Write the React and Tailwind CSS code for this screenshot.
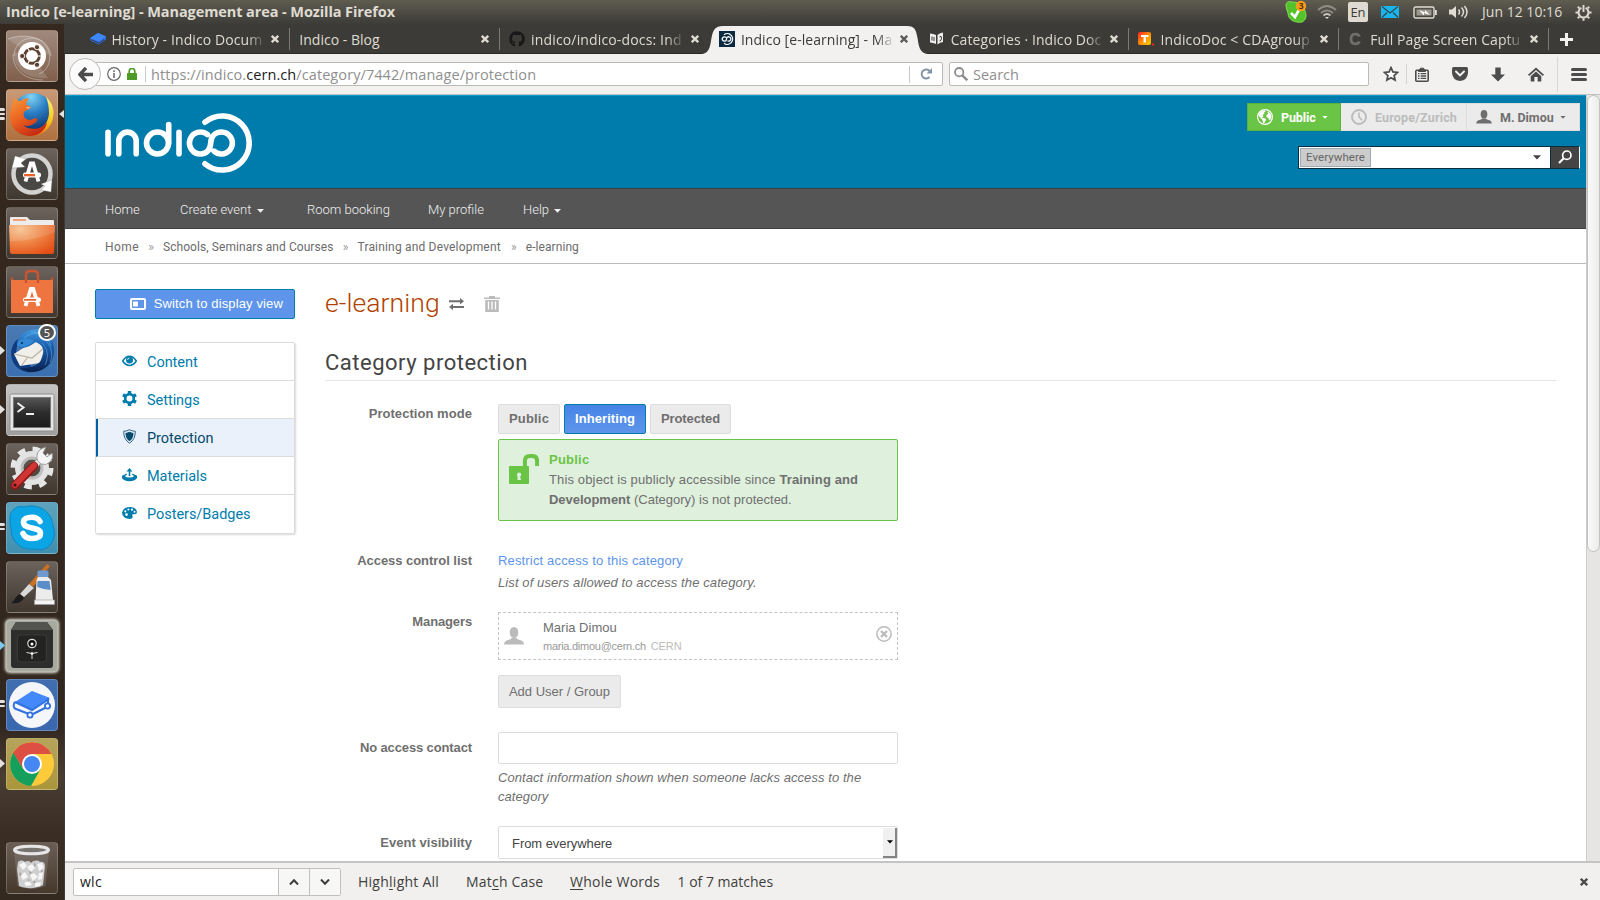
import React from "react";
import { FaGithub } from "react-icons/fa";

const ubuntu = "font-['Open_Sans','Noto_Sans',sans-serif]";

/* ---------- Launcher ---------- */

function UbuntuIcon() {
  return (
    <svg viewBox="0 0 52 52" className="size-full">
      <g fill="none" stroke="#fff" strokeOpacity=".35" strokeWidth="1">
        <path d="M2 9C14 4 38 4 43 22c3 12-4 20-10 22" />
        <path d="M8 26c0-10 8-18 18-18s18 8 19 18" />
        <path d="M7 24c0 16 12 26 30 26" />
      </g>
      <path d="M2 9C20 2 40 8 44 24L26 26Z M8 22c-1 16 12 28 34 26L26 26Z" fill="#fff" fillOpacity=".15" />
      <circle cx="26" cy="26" r="14" fill="#fff" />
      <circle cx="26" cy="26" r="7.3" fill="none" stroke="#5c4030" strokeWidth="3" />
      <g stroke="#fff" strokeWidth="1.2">
        <path d="M26 26 36 26M26 26l-5-9M26 26l-5 9" />
      </g>
      <circle cx="26" cy="26" r="5.6" fill="#fff" />
      <g fill="#5c4030" stroke="#fff" strokeWidth=".9">
        <circle cx="16.2" cy="26" r="2.6" />
        <circle cx="31" cy="17.2" r="2.6" />
        <circle cx="31" cy="34.8" r="2.6" />
      </g>
    </svg>
  );
}

function FirefoxIcon() {
  return (
    <svg viewBox="0 0 52 52" className="size-full">
      <defs>
        <radialGradient id="ffb" cx=".45" cy=".1" r=".9">
          <stop offset="0" stopColor="#7fd4f5" />
          <stop offset=".45" stopColor="#2a7fc4" />
          <stop offset="1" stopColor="#0c2a66" />
        </radialGradient>
        <linearGradient id="ffo" x1="0" y1="0" x2=".6" y2="1">
          <stop offset="0" stopColor="#f79a3c" />
          <stop offset=".5" stopColor="#ec6420" />
          <stop offset="1" stopColor="#c62d14" />
        </linearGradient>
        <linearGradient id="ffy" x1="0" y1="0" x2="0" y2="1">
          <stop offset="0" stopColor="#fff27a" />
          <stop offset=".6" stopColor="#f9c81c" />
          <stop offset="1" stopColor="#f07a18" />
        </linearGradient>
      </defs>
      <circle cx="27" cy="24" r="20" fill="url(#ffb)" />
      <path d="M40 8c6 5 9 13 7 21-2 11-12 18-22 18l-2-4c12-1 19-8 20-18 0-7-1-12-3-17z" fill="url(#ffy)" />
      <path d="M8 8c1 3 4 4 6 4 3-2 6-3 9-2-2 2-3 4-3 6 2 0 4 1 5 2-1 2-4 3-6 4-2 2-2 5 0 7 3 3 7 2 10 0 3 0 3 3 0 5-4 3-8 4-12 2 7 6 18 5 24-3-1 8-8 14-17 14C12 47 4 38 4 27c0-7 3-11 4-19z" fill="url(#ffo)" />
      <path d="M20 18l5 0-3 2z" fill="#fff" fillOpacity=".5" />
    </svg>
  );
}

function UpdaterIcon() {
  return (
    <svg viewBox="0 0 52 52" className="size-full">
      <circle cx="26" cy="26" r="18.500" fill="#4a4845" stroke="#d4d3d1" strokeWidth="4.500" />
      <path d="M9 8 6 20l13-1-4-4 5-4z" fill="#fff" stroke="#777" strokeWidth=".3" />
      <path d="M46 32 35 36l4 2-4 4 10 2z" fill="#fff" stroke="#777" strokeWidth=".3" />
      <path d="M19.500 33.500 24.800 15.500h2.400L32.500 33.500" fill="none" stroke="#fff" strokeWidth="3.800" />
      <rect x="17" y="24.500" width="18" height="5" rx="2" fill="#fff" />
      <rect x="18" y="26" width="11" height="2.300" fill="#e9622c" />
    </svg>
  );
}

function FilesIcon() {
  return (
    <svg viewBox="0 0 52 52" className="size-full">
      <defs>
        <radialGradient id="fold" cx=".25" cy=".15" r="1">
          <stop offset="0" stopColor="#f6c08a" />
          <stop offset=".5" stopColor="#ee8344" />
          <stop offset="1" stopColor="#e44d14" />
        </radialGradient>
      </defs>
      <path d="M4 11q0-1 1-1h16l3 3h23q1 0 1 1v6H4z" fill="#eeeceb" />
      <rect x="7" y="12" width="13" height="2" fill="#f0a278" />
      <path d="M3 18h46l-1 27q0 2-2 2H6q-2 0-2-2z" fill="url(#fold)" />
      <path d="M3 18h46v7C30 33 14 34 4 34z" fill="#fff" fillOpacity=".12" />
    </svg>
  );
}

function SoftwareIcon() {
  return (
    <svg viewBox="0 0 52 52" className="size-full">
      <path d="M5 10v6h42v-6l-3 4H8z" fill="#c4532b" />
      <rect x="5" y="14" width="42" height="33" fill="#ee7440" />
      <path d="M20 17V9q0-4 4-4h4q4 0 4 4v8" fill="none" stroke="#c95630" strokeWidth="2.500" />
      <path d="M19.500 40 24.800 23h2.400L32.500 40" fill="none" stroke="#fff" strokeWidth="3.800" />
      <rect x="17" y="31.500" width="18" height="4.600" rx="2" fill="#fff" />
      <rect x="18" y="33" width="12" height="1.700" fill="#e9622c" />
    </svg>
  );
}

function ThunderbirdIcon() {
  return (
    <svg viewBox="0 0 52 52" className="size-full">
      <defs>
        <linearGradient id="tb" x1="0" y1="0" x2="0" y2="1">
          <stop offset="0" stopColor="#3f9be0" />
          <stop offset=".4" stopColor="#1b5fb0" />
          <stop offset="1" stopColor="#08204f" />
        </linearGradient>
      </defs>
      <path d="M12 14C4 20 3 33 9 40c5 6 12 8 18 7l-4-10-13-9z" fill="#0f3c80" />
      <path d="M8 29 28 16l11 6-5 16-20 3z" fill="#f1efe9" />
      <path d="m8 29 18 4 12-10M15 41l7-9" fill="none" stroke="#b9b3a6" strokeWidth="1.200" />
      <path d="M11 21C11 12 18 5 30 4c12 1 19 11 18 23-1 12-10 20-22 20-5 0-9-2-12-4 10 1 20-3 22-10 3-8 1-13-6-16-6 4-12 8-19 4z" fill="url(#tb)" />
      <path d="M11 21c0-5 3-7 7-7 4-1 7 0 10 2-4 4-9 7-13 6z" fill="#3588d4" />
      <path d="M18 13c8-7 19-6 25 2M25 7c9-1 17 5 20 14M36 18c6 6 7 14 3 22M41 17c5 6 6 14 3 20" fill="none" stroke="#7cc4f2" strokeOpacity=".45" />
      <circle cx="16" cy="18" r=".9" fill="#081b3c" />
    </svg>
  );
}

function TerminalIcon() {
  return (
    <svg viewBox="0 0 52 52" className="size-full">
      <defs>
        <linearGradient id="term" x1="0" y1="0" x2="0" y2="1">
          <stop offset="0" stopColor="#555" />
          <stop offset=".5" stopColor="#2d2d2d" />
          <stop offset="1" stopColor="#1b1b1b" />
        </linearGradient>
      </defs>
      <rect x="4" y="10" width="44" height="37" rx="1.500" fill="#e4e4e4" stroke="#8d8d8d" />
      <rect x="7.500" y="13.500" width="37" height="30" fill="url(#term)" stroke="#777" />
      <path d="m11.500 19 6 4.500-6 4.500" fill="none" stroke="#eee" strokeWidth="2" />
      <path d="M20 30h8" stroke="#eee" strokeWidth="2" />
    </svg>
  );
}

function SettingsIcon() {
  return (
    <svg viewBox="0 0 52 52" className="size-full">
      <circle cx="26" cy="25" r="19" fill="none" stroke="#e6e6e6" strokeWidth="5" strokeDasharray="7.460 7.460" />
      <circle cx="26" cy="25" r="13" fill="none" stroke="#e3e3e3" strokeWidth="8" />
      <circle cx="26" cy="25" r="10" fill="none" stroke="#bdbdbd" strokeWidth="3" />
      <path d="m24 28 12-13" stroke="#8a8a8a" strokeWidth="6.500" />
      <path d="m24 28 12-13" stroke="#ececec" strokeWidth="5" />
      <path d="M40 4l-3 6 4 4 5-4q2 5-2 9t-9 2q-5-3-4-9t9-8z" fill="#f4f4f4" stroke="#8a8a8a" strokeWidth=".8" />
      <path d="M9 42.500 28 23" stroke="#8f1717" strokeWidth="8.500" strokeLinecap="round" />
      <path d="M9 42 28 22.500" stroke="#cf3535" strokeWidth="6" strokeLinecap="round" />
      <circle cx="9" cy="42" r="1.600" fill="#3c1010" />
    </svg>
  );
}

function SkypeIcon() {
  return (
    <svg viewBox="0 0 52 52" className="size-full">
      <path d="M4 16C4 8 11 3 18 5 32 1 46 9 47 24c3 8 1 16-5 21-4 3-9 3-12 2C15 49 5 40 5 26c-1-3-1-7-1-10z" fill="#0ba4e4" stroke="#0d86bd" />
      <path d="M34 19.500C32 15.800 29 15.300 26 15.300c-5 0-8.500 1.700-8.500 5 0 4 4 4.700 8.500 5.700 4.700 1 8.500 2 8.500 5.500 0 4-4 5-8.500 5-4 0-7.300-1.300-9-5" fill="none" stroke="#fff" strokeWidth="5.600" strokeLinecap="round" />
    </svg>
  );
}

function PaintIcon() {
  return (
    <svg viewBox="0 0 52 52" className="size-full">
      <path d="M41 3 44 5 27 26l-4-3z" fill="#c87023" />
      <path d="m23 23 5 4-10 9-4-3z" fill="#d9d9d9" />
      <path d="m14 33 4 4c-3 5-8 6-13 5 4-2 4-7 9-9z" fill="#1c1c1c" />
      <rect x="31.500" y="9.500" width="11" height="6.500" rx="1.500" fill="#6f9bd0" />
      <path d="M32 16h10l3 3 2 20H29.500l1-20z" fill="#ececec" />
      <path d="M31.500 20h12l1.200 9-7-1-6.500-2z" fill="#5a8dc8" />
      <rect x="28.500" y="39" width="20" height="4.500" fill="#f5f5f5" stroke="#9a9a9a" strokeWidth=".6" />
    </svg>
  );
}

function SafeIcon() {
  return (
    <svg viewBox="0 0 52 52" className="size-full">
      <path d="M10 2h31l6 8v35q0 3-3 3H8q-3 0-3-3V10z" fill="#2d2d2b" />
      <path d="M10 2h31l6 8H5z" fill="#53534f" />
      <rect x="11.500" y="15" width="29" height="27" rx="3" fill="#232321" stroke="#3a3a38" strokeWidth="1.200" />
      <circle cx="26" cy="23.500" r="4.200" fill="#111" stroke="#dcdcdc" strokeWidth="1.200" />
      <circle cx="26" cy="24" r="1.500" fill="#fff" />
      <path d="M26 33.500v5.500M26 33.500l-5.500-1M26 33.500l5.500-1" stroke="#d8d8d8" strokeWidth="1" />
      <circle cx="26" cy="33.500" r="1.300" fill="#fff" />
    </svg>
  );
}

function GitbookIcon() {
  return (
    <svg viewBox="0 0 52 52" className="size-full">
      <circle cx="26" cy="26" r="23" fill="#f4f6fa" />
      <path d="M9 23 26 12l18 7-18 12z" fill="#4389fb" />
      <path d="M9 23c-2 2-2 6 1 7l13 5M9 23l17 8 17-11" fill="none" stroke="#2f71e0" strokeWidth="2" />
      <path d="m27 35 12-6M42 19v5" stroke="#2f71e0" strokeWidth="2" />
      <circle cx="24" cy="36" r="2.600" fill="#fff" stroke="#2f71e0" strokeWidth="1.800" />
      <circle cx="41.500" cy="27" r="2.600" fill="#fff" stroke="#2f71e0" strokeWidth="1.800" />
    </svg>
  );
}

function ChromeIcon() {
  return (
    <svg viewBox="0 0 52 52" className="size-full">
      <circle cx="26" cy="26" r="22" fill="#fdca3a" />
      <path d="M26 26V16h19.500A22 22 0 0 0 7 15l10.400 16z" fill="#dd4f43" />
      <path d="M7.200 14.800A22 22 0 0 0 25 48l9.600-17-17.300 0z" fill="#159f5c" />
      <circle cx="26" cy="26" r="10" fill="#fff" />
      <circle cx="26" cy="26" r="8" fill="#4687f3" />
    </svg>
  );
}

function TrashIcon() {
  return (
    <svg viewBox="0 0 52 52" className="size-full">
      <path d="M8 9h35l-3.500 35q-13.500 6-28 0z" fill="#999" fillOpacity=".3" />
      <path d="M12 20c2-2 5-2 7 0 3-2 5-1 6 1 3-3 7-3 9-1 3-1 5 1 5 4l-2 19c-7 4-17 4-24 1l-2-17z" fill="#cfcfcf" />
      <g fill="#f6f6f6">
        <path d="m13 23 5-3 3 4-4 4zM21 25l5-3 3 4-4 4zM31 22l5-1 2 5-5 3zM14 33l5-3 3 5-5 3zM24 33l4-2 4 4-5 4zM33 31l4-1-1 7-4 1zM18 41l5-2 3 4-6 1zM29 41l6-1-1 4-5 1z" />
      </g>
      <g fill="#a5a5a5">
        <path d="m13 30 3 2-2 3zM23 29l3 1-2 3zM27 39l3 0-2 3zM28 20l2 3-2 2zM35 28l2 1-2 2zM22 37l2 1-2 2z" />
      </g>
      <ellipse cx="25.500" cy="8" rx="17" ry="3.800" fill="#77736f" stroke="#e6e6e6" strokeWidth="3" />
    </svg>
  );
}

const neutral = "bg-linear-to-b from-[#6b635c] to-[#40372f]";

const launcher = [
  { name: "dash", Icon: UbuntuIcon, bg: "bg-linear-to-b from-[#a08a7d] to-[#80604c]" },
  { name: "firefox", Icon: FirefoxIcon, bg: "bg-linear-to-b from-[#c99a78] to-[#b0703e]", windows: 3, active: true },
  { name: "updater", Icon: UpdaterIcon, bg: neutral },
  { name: "files", Icon: FilesIcon, bg: neutral },
  { name: "software", Icon: SoftwareIcon, bg: neutral },
  { name: "mail", Icon: ThunderbirdIcon, bg: "bg-linear-to-b from-[#4a7ab2] to-[#3a6fb0]", windows: 1, badge: "5" },
  { name: "terminal", Icon: TerminalIcon, bg: "bg-linear-to-b from-[#c3c3c3] to-[#9e9e9e]", windows: 1 },
  { name: "settings", Icon: SettingsIcon, bg: neutral },
  { name: "skype", Icon: SkypeIcon, bg: "bg-linear-to-b from-[#5fa3bd] to-[#3f8fb0]", windows: 2 },
  { name: "paint", Icon: PaintIcon, bg: neutral },
  { name: "safe", Icon: SafeIcon, bg: "bg-[#a9aa9f] shadow-[0_0_3px_1px_#e8e8dc] border-[#e8e8dc]", windows: 1, blue: true },
  { name: "gitbook", Icon: GitbookIcon, bg: "bg-linear-to-b from-[#416eae] to-[#3a68ae]", windows: 2 },
  { name: "chrome", Icon: ChromeIcon, bg: "bg-linear-to-b from-[#b5a45c] to-[#ab963a]", windows: 1 },
];

function Tile({ Icon, bg, windows = 0, badge, active, blue }) {
  return (
    <div className={`relative size-[52px] shrink-0 rounded-[4px] border border-white/20 ${bg}`}>
      <div className="-m-px size-[52px]">
        <Icon />
      </div>
      {windows === 1 && (
        <svg viewBox="0 0 5 9" className="absolute -left-[7px] top-[20px] h-[9px] w-[5px]">
          <path d="M0 0v9l5-4.500z" fill={blue ? "#7cc8ef" : "#e3e1df"} />
        </svg>
      )}
      {windows > 1 && (
        <div className={`absolute -left-[7px] flex w-[5px] flex-col gap-[2px] ${windows === 3 ? "top-[18px]" : "top-[20px]"}`}>
          {Array.from({ length: windows }, (_, i) => (
            <span key={i} className="h-[2.5px] rounded-r-full bg-[#e3e1df]" />
          ))}
        </div>
      )}
      {active && (
        <svg viewBox="0 0 5 8" className="absolute -right-[7px] top-[20px] h-2 w-[5px]">
          <path d="M5 0v8L0 4z" fill="#e3e1df" />
        </svg>
      )}
      {badge && (
        <span className="absolute -top-[2px] right-px flex h-[17px] w-[18px] items-center justify-center rounded-full border-2 border-white bg-[#555] text-[11px] leading-none text-white">
          {badge}
        </span>
      )}
    </div>
  );
}

function Launcher() {
  return (
    <div className="flex w-[65px] shrink-0 flex-col gap-[7px] border-r border-[#3c3b37] bg-[linear-gradient(180deg,#35281e_0%,#32271f_80%,#4a3d32_86%,#3a2e25_92%,#34291f_100%)] pl-[6px] pt-[6px]">
      {launcher.map((t) => (
        <Tile key={t.name} {...t} />
      ))}
      <div className="mt-[45px]">
        <Tile Icon={TrashIcon} bg="bg-linear-to-b from-[#6b5f55] to-[#46382d]" />
      </div>
    </div>
  );
}

/* ---------- Title bar ---------- */

function SkypeTrayIcon() {
  return (
    <svg viewBox="0 0 22 24" className="h-6 w-[22px]">
      <path d="M1 5c0-3 3-4 6-3 8 0 12 4 13 9 2 5 1 9-3 11-7 1-14-2-14-9-1-3-2-5-2-8z" fill="#55c22c" stroke="#7fe052" />
      <path d="m6 13 4 4 5-9" fill="none" stroke="#fff" strokeWidth="2.600" />
      <circle cx="16" cy="6" r="5.200" fill="#f59d1c" />
      <text x="14" y="9" fontSize="8" fontWeight="700" fill="#5a2c00" fontFamily="Open Sans">3</text>
    </svg>
  );
}

function TitleBar() {
  return (
    <div className={`flex h-6 shrink-0 items-center bg-linear-to-b from-[#5f5c50] to-[#3d3c38] pl-[6px] text-[#dfdbd2] ${ubuntu}`}>
      <span className="grow whitespace-nowrap text-[14.500px] font-bold leading-none tracking-[-0.09px]">
        Indico [e-learning] - Management area - Mozilla Firefox
      </span>
      <SkypeTrayIcon />
      <svg viewBox="0 0 20 16" className="ml-[10px] h-4 w-5" fill="none" stroke="#8f8c84" strokeWidth="1.800">
        <path d="M1 6q9-8 18 0M4 9q6-5 12 0" />
        <path d="M6.500 11.500q3.500-3 7 0" stroke="#c9c5bd" />
        <path d="m8 13 2 2 2-2z" fill="#dfdbd2" stroke="none" />
      </svg>
      <span className="ml-[11px] flex h-[20px] w-5 items-center justify-center rounded-[2px] bg-[#dfdbd2] text-[13px] leading-none text-[#3c3b37]">En</span>
      <svg viewBox="0 0 18 12" className="ml-[13px] h-[12px] w-[18px]">
        <rect width="18" height="12" fill="#19b6ee" />
        <path d="m1 .5 8 6.500 8-6.500M1 11.500l5-5M17 11.500l-5-5" fill="none" stroke="#33454e" strokeWidth="1.200" />
      </svg>
      <svg viewBox="0 0 25 13" className="ml-[14px] h-[13px] w-[25px]">
        <rect x="1" y="1" width="20" height="11" rx="1.500" fill="none" stroke="#dfdbd2" strokeWidth="1.400" />
        <rect x="3.500" y="3.500" width="15" height="6" fill="#9b988f" />
        <path d="m6 4 6 2.500 0-2.500 5 5-6-2v2.500z" fill="#fff" />
        <rect x="22" y="4" width="1.800" height="5" fill="#dfdbd2" />
      </svg>
      <svg viewBox="0 0 20 16" className="ml-[11px] h-4 w-5" fill="none" stroke="#dfdbd2" strokeWidth="1.500">
        <path d="M0 5.500h3L7 2v12l-4-3.500H0z" fill="#dfdbd2" stroke="none" />
        <path d="M9.500 5.500q2 2.500 0 5M12.500 3.500q4 4.500 0 9M15.500 2q5 6 0 12" />
      </svg>
      <span className="ml-[13px] w-[82px] whitespace-nowrap text-[14px] leading-none tracking-[0.02px]">Jun 12 10:16</span>
      <svg viewBox="0 0 18 18" className="ml-[11px] mr-[8px] h-[17px] w-[17px]" fill="none" stroke="#dfdbd2">
        <path d="M6.800 4.100A5.300 5.300 0 1 0 11.200 4.100" strokeWidth="2.200" />
        <path d="M9 1v7.500" strokeWidth="2" />
        <path d="M3 3l1.500 1.500M15 3l-1.500 1.500M.5 9H3M15 9h2.500M3 15l1.500-1.500M15 15l-1.500-1.500M9 15v2.800" strokeWidth="2.200" />
      </svg>
    </div>
  );
}

/* ---------- Tabs ---------- */

function GitbookMini() {
  return (
    <svg viewBox="0 0 16 16" className="size-4 shrink-0">
      <path d="M0 7.500 8 2l8 3.500v3L9 13.500 1 10z" fill="#2d6fe0" />
      <path d="M0 7 8 2l8 3.500L9 10.500z" fill="#3f88fb" />
      <path d="m1.500 8.800 7.400 3.400L14 8.700" fill="none" stroke="#3c3b37" />
    </svg>
  );
}
function IndicoMini() {
  return (
    <svg viewBox="0 0 16 16" className="size-4 shrink-0">
      <rect width="16" height="16" fill="#0b2a3f" />
      <g fill="none" stroke="#fff" strokeWidth="1.300">
        <path d="M7 6.500a2.200 2.200 0 1 0 0 3q.5-.6.5-1.500a2.200 2.200 0 1 1 1 1.800" />
        <path d="M5 3.700A5.400 5.400 0 1 1 5 12.300" />
      </g>
    </svg>
  );
}
function BookMini() {
  return (
    <svg viewBox="0 0 16 16" className="size-4 shrink-0">
      <path d="M1 2.500q3.500 0 6 1.500v9q-2.500-1.500-6-1.500zM14 1.500q-3 0-5.500 2.500v9.500q2.500-2.500 5.500-2.500z" fill="#eee" />
      <path d="M3 5.500v4M5 6v4M10.500 6q2-2 2 1t-2 3" stroke="#3c3b37" fill="none" />
    </svg>
  );
}
function TwikiMini() {
  return (
    <svg viewBox="0 0 16 16" className="size-4 shrink-0">
      <defs>
        <linearGradient id="tw" x1="0" x2="1" y1="0" y2="1">
          <stop offset="0" stopColor="#f22" />
          <stop offset=".5" stopColor="#ff8a00" />
          <stop offset="1" stopColor="#ffd000" />
        </linearGradient>
      </defs>
      <rect y="1" width="13" height="13" rx="2" fill="url(#tw)" />
      <path d="M3 5h7.500M6.700 5v6.500" stroke="#fff" strokeWidth="2.200" />
      <rect x="14" y="12.500" width="2" height="2" fill="#f22" />
    </svg>
  );
}
function CMini() {
  return (
    <svg viewBox="0 0 16 16" className="size-4 shrink-0">
      <path d="M11.300 5.700C10.500 2.500 3 1.500 3 8s7.500 5.500 8.300 2.300" fill="none" stroke="#6e6e6c" strokeWidth="2.800" />
    </svg>
  );
}

function Cross({ color }) {
  return (
    <svg viewBox="0 0 8 8" className="size-2 shrink-0" stroke={color} strokeWidth="2.300">
      <path d="m.8.8 6.400 6.400M7.200.8.8 7.200" />
    </svg>
  );
}

function TabText({ children, className = "" }) {
  return (
    <span className={`mr-auto shrink-0 overflow-hidden whitespace-nowrap pt-[2px] text-[14px] leading-[22px] ${className}`}>
      {children}
    </span>
  );
}

const fade = "w-[154px] mask-[linear-gradient(90deg,#000_88%,transparent)]";

function Tab({ icon, title, text, last }) {
  return (
    <div className="flex h-full w-[209.800px] shrink-0 items-center pl-[10px] pr-[9.500px]">
      {icon}
      <TabText className={`${icon ? "ml-[6px]" : ""} ${text}`}>{title}</TabText>
      <Cross color="#dfdbd2" />
      {!last && <span className="-mr-[10px] ml-[9.500px] h-[22px] w-px bg-[#7b7a76]" />}
    </div>
  );
}

function TabStrip() {
  return (
    <div className={`flex h-[30px] shrink-0 items-center border-b border-[#2a2926] bg-[#3c3b37] pl-[14.500px] text-[#dfdbd2] ${ubuntu}`}>
      <Tab icon={<GitbookMini />} title="History - Indico Docum" text={`${fade} tracking-[0.1px]`} />
      <Tab title="Indico - Blog" text="tracking-[0.02px]" />
      <Tab icon={<FaGithub className="size-4 shrink-0 text-[#181818]" />} title="indico/indico-docs: Ind" text={`${fade} tracking-[0.15px]`} last />
      <div className="relative h-full w-[209.800px] shrink-0 text-[#3c3b37]">
        <svg viewBox="0 0 230 28" preserveAspectRatio="none" className="absolute -left-[9px] top-[2px] h-[28px] w-[230px]">
          <path d="M0 28C10 28 10 20 11.500 12S15 0 23 0H207c8 0 9 4 10.500 12S219 28 230 28z" fill="#f2f1f0" />
        </svg>
        <div className="relative flex h-full items-center pl-[10px] pr-[10.500px]">
          <IndicoMini />
          <TabText className={`ml-[6px] tracking-[0.05px] ${fade}`}>Indico [e-learning] - Ma</TabText>
          <Cross color="#5c5b57" />
        </div>
      </div>
      <Tab icon={<BookMini />} title="Categories · Indico Doc" text={`${fade} tracking-[0.08px]`} />
      <Tab icon={<TwikiMini />} title="IndicoDoc < CDAgroup" text={`${fade} tracking-[0.12px]`} />
      <Tab icon={<CMini />} title="Full Page Screen Captu" text={`${fade} tracking-[0.06px]`} />
      <svg viewBox="0 0 13 13" className="ml-[12px] mt-[2px] size-[13px] shrink-0" stroke="#f3f2f0" strokeWidth="3">
        <path d="M6.500 0v13M0 6.500h13" />
      </svg>
    </div>
  );
}

/* ---------- Navigation toolbar ---------- */

function Toolbar() {
  return (
    <div className={`flex h-[41px] shrink-0 items-center border-b border-[#c3c1bd] bg-[#f2f1f0] pl-1 ${ubuntu}`}>
      <div className="relative z-10 flex size-8 shrink-0 items-center justify-center rounded-full border border-[#bdbbb8] bg-[#fbfbfb]">
        <svg viewBox="0 0 16 16" className="size-[15px]" fill="none" stroke="#4c4c4c" strokeWidth="3.600">
          <path d="M8.500 1 2 8l6.500 7M2.500 8H16" />
        </svg>
      </div>
      <div className="-ml-[6px] flex h-6 w-[848px] shrink-0 items-center rounded-[2px] border border-[#bdbbb8] bg-white pl-[11px]">
        <svg viewBox="0 0 14 14" className="size-[14px]" fill="none" stroke="#666">
          <circle cx="7" cy="7" r="6.300" strokeWidth="1.200" />
          <path d="M7 6v5M7 3.200v1.700" strokeWidth="1.500" />
        </svg>
        <svg viewBox="0 0 10 12" className="ml-[6px] h-3 w-[10px]">
          <path d="M2.200 5.500V3.300a2.800 2.800 0 0 1 5.600 0v2.200" fill="none" stroke="#4d9a26" strokeWidth="1.700" />
          <rect y="5" width="10" height="7" rx=".6" fill="#4d9a26" />
        </svg>
        <span className="ml-[8px] h-4 w-px bg-[#c9c9c9]" />
        <span className="ml-[5px] grow whitespace-nowrap pt-[2px] text-[14.500px] leading-5 tracking-[0.08px] text-[#8f8f8f]">
          https://indico.<span className="text-[#1c1c1c]">cern.ch</span>/category/7442/manage/protection
        </span>
        <span className="h-[17px] w-px bg-[#c9c9c9]" />
        <svg viewBox="0 0 12 12" className="ml-[10px] mr-[10px] size-3" fill="none" stroke="#8393a5" strokeWidth="1.900">
          <path d="M9.500 9A4.500 4.500 0 1 1 9.500 3" />
          <path d="M12 0v5.500H6.500z" fill="#8393a5" stroke="none" />
        </svg>
      </div>
      <div className="ml-[6px] flex h-6 w-[420px] shrink-0 items-center rounded-[2px] border border-[#bdbbb8] bg-white pl-[4px]">
        <svg viewBox="0 0 14 14" className="size-[14px]" fill="none" stroke="#8d8d8d">
          <circle cx="5.200" cy="5.200" r="4.200" strokeWidth="1.800" />
          <path d="m8.300 8.300 5 5" strokeWidth="2.400" />
        </svg>
        <span className="ml-[5px] pt-[2px] text-[14.500px] leading-5 text-[#8f8f8f]">Search</span>
      </div>
      <svg viewBox="0 0 16 16" className="ml-[14px] size-4" fill="#fff" stroke="#4c4c4c" strokeWidth="1.700">
        <path d="m8 1.600 1.900 4.300 4.700.5-3.500 3.100 1 4.600L8 11.700l-4.100 2.400 1-4.600L1.400 6.400l4.700-.5z" />
      </svg>
      <span className="ml-[7px] h-5 w-px bg-[#d5d3d0]" />
      <svg viewBox="0 0 14 15" className="ml-[8px] h-[15px] w-[14px]" fill="none" stroke="#4c4c4c" strokeWidth="1.600">
        <rect x=".8" y="3.300" width="12.400" height="10.900" rx="1" />
        <path d="M3.500 4.500V3Q5 2.800 5.500 1.200h3Q9 2.800 10.500 3v1.500z" fill="#4c4c4c" strokeWidth="1" />
        <path d="M3 6.700h1.500M3 9h1.500M3 11.300h1.500M5.600 6.700h5.600M5.600 9h5.600M5.600 11.300h5.600" strokeWidth="1.300" />
      </svg>
      <svg viewBox="0 0 16 14" className="ml-[23px] h-[14px] w-4">
        <path d="M1.500 0h13Q16 0 16 1.500V6q-.5 7-8 8Q.5 13 0 6V1.500Q0 0 1.500 0z" fill="#4c4c4c" />
        <path d="m4 4.500 4 3.900 4-3.900" fill="none" stroke="#f2f1f0" strokeWidth="2" strokeLinecap="round" />
      </svg>
      <svg viewBox="0 0 14 15" className="ml-[23px] h-[15px] w-[14px]">
        <path d="M4.300 .5h5.400v7H14L7 14.500 0 7.500h4.300z" fill="#4c4c4c" />
      </svg>
      <svg viewBox="0 0 16 15" className="ml-[23px] h-[15px] w-4">
        <path d="M8 .5 0 7.800l1.200 1.300L8 3l6.800 6.100L16 7.800z" fill="#4c4c4c" />
        <path d="M2.700 9.300 8 4.500l5.300 4.800V14.500H9.600v-4.500H6.400v4.500H2.700z" fill="#4c4c4c" />
      </svg>
      <span className="ml-[13px] h-[35px] w-px bg-[#d9d7d4]" />
      <div className="ml-[13px] flex w-4 flex-col gap-[2px]">
        <span className="h-[3px] rounded bg-[#4c4c4c]" />
        <span className="h-[3px] rounded bg-[#4c4c4c]" />
        <span className="h-[3px] rounded bg-[#4c4c4c]" />
      </div>
    </div>
  );
}

/* ---------- Indico page ---------- */

function Caret({ className }) {
  return (
    <svg viewBox="0 0 7 4" className={className} fill="currentColor">
      <path d="M0 0h7L3.500 3.800z" />
    </svg>
  );
}

function Logo() {
  return (
    <svg viewBox="0 0 147 60" className="h-[60px] w-[147px]" fill="none" stroke="#fff" strokeWidth="5.600" strokeLinecap="round">
      <path d="M3 19.300V40.700" />
      <path d="M13.800 40.700V27.800a8.700 8.700 0 0 1 17.400 0V40.700" />
      <circle cx="52.500" cy="30" r="11" />
      <path d="M63.700 11.500V30" />
      <path d="M74 19.300V40.700" />
      <path d="M102.500 21.500A11 11 0 1 0 95.500 41C102 41 105.300 36.500 105.700 30 106 23.500 110 19 116.500 19A11 11 0 1 1 109 38.200" />
      <path d="M100 9.200A27 27 0 1 1 100 50.800" />
    </svg>
  );
}

function UserGlyph({ className }) {
  return (
    <svg viewBox="0 0 20 18" className={className} fill="currentColor">
      <ellipse cx="10" cy="5.500" rx="4.300" ry="5.500" />
      <path d="M0 17.500q0-3.500 4-4.500 3-.6 3.500-2h5q.5 1.400 3.500 2 4 1 4 4.500z" />
    </svg>
  );
}

function Header() {
  return (
    <div className="flex h-[93px] shrink-0 justify-between border-t border-[#0a9bd4] bg-[#007cac] pl-10 pr-[6px]">
      <div className="pt-[17px]">
        <Logo />
      </div>
      <div className="flex flex-col items-end pt-[7px] font-[Roboto,sans-serif]">
        <div className="flex h-7 text-[12.500px] font-bold">
          <div className="flex w-[94px] items-center border border-[#5cb13a] bg-[#6ac445] pl-[9px] text-white">
            <svg viewBox="0 0 16 16" className="size-4">
              <circle cx="8" cy="8" r="7.400" fill="none" stroke="#fff" strokeWidth="1.200" />
              <path d="M2.500 4Q4.500 1.300 8 1.200L8.500 2.500 7 3.500l.5 1L5.500 6l1 1-.5 1H4.500L6 9l2.500.5.5 1.500-2 3.500-1-.5-.5-3L3.500 9 2 7z" fill="#fff" />
              <path d="M10.500 2.500q3.500 1.500 4 5l-1 3-1.500 1-.5-2.500-2-1L9.500 6l2-1.500-1-.5z" fill="#fff" />
            </svg>
            <span className="ml-[8px] w-[35px] pt-[2px] tracking-[-0.1px]">Public</span>
            <Caret className="ml-[6px] mt-px h-[3px] w-[6px]" />
          </div>
          <div className="flex w-[125px] items-center border-y border-[#e0e0e0] bg-[#ebebeb] pl-[10px] text-[#bbb]">
            <svg viewBox="0 0 16 16" className="size-4" fill="none" stroke="#bbb">
              <circle cx="8" cy="8" r="7" strokeWidth="1.900" />
              <path d="M8 3.500V8l3 3.300" strokeWidth="1.600" />
            </svg>
            <span className="ml-[8px] pt-[2px] tracking-[0.18px]">Europe/Zurich</span>
          </div>
          <div className="flex w-[114px] items-center border border-[#dcdcdc] bg-[#ebebeb] pl-[9px] text-[#6f6f6f]">
            <UserGlyph className="-mt-px h-[14px] w-4" />
            <span className="ml-[8px] w-[55px] whitespace-nowrap pt-[2px] tracking-[-0.05px]">M. Dimou</span>
            <Caret className="ml-[5px] mt-px h-[3px] w-[6px]" />
          </div>
        </div>
        <div className="mt-[15px] flex h-[23px] w-[282px] border border-[#06303f] border-r-white bg-white">
          <div className="flex grow items-center pl-px">
            <span className="flex h-[19px] w-[71px] items-center justify-center border border-[#9aabba] bg-[#ccc] pt-px text-[11.500px] tracking-[0.06px] text-[#666]">Everywhere</span>
            <Caret className="ml-auto mr-[9px] h-[5px] w-[8px] text-[#444]" />
          </div>
          <span className="flex w-[29px] items-center justify-center border-l border-[#06303f] bg-[#444]">
            <svg viewBox="0 0 14 14" className="-mt-[2px] size-[14px]" fill="none" stroke="#fff">
              <circle cx="8.800" cy="5.200" r="4.200" strokeWidth="1.700" />
              <path d="M5.500 8.500 1 13" strokeWidth="2.200" />
            </svg>
          </span>
        </div>
      </div>
    </div>
  );
}

function NavBar() {
  return (
    <div className="flex h-[41px] shrink-0 items-center border-y border-[#404040] bg-[#555] pl-10 pt-[2px] font-[Roboto,sans-serif] text-[13px] font-light text-[#f0f0f0]">
      <span className="w-[75px]">Home</span>
      <span className="flex w-[127px] items-center">
        <span className="w-[70px] whitespace-nowrap">Create event</span>
        <Caret className="ml-[7px] mt-[2px] h-[4px] w-[7px]" />
      </span>
      <span className="w-[121px]">Room booking</span>
      <span className="w-[95px]">My profile</span>
      <span className="flex items-center">
        Help
        <Caret className="ml-[5px] mt-[2px] h-[4px] w-[7px]" />
      </span>
    </div>
  );
}

function Breadcrumb() {
  const sep = <span className="w-6 text-center text-[#999]">»</span>;
  return (
    <div className="flex h-[35px] shrink-0 items-center border-b border-[#bbb] pl-10 pt-[2px] font-[Roboto,sans-serif] text-[12px] text-[#6c6c6c]">
      <span className="tracking-[0.42px]">Home</span>
      {sep}
      <span className="tracking-[0.07px]">Schools, Seminars and Courses</span>
      {sep}
      <span className="mr-px tracking-[0.18px]">Training and Development</span>
      {sep}
      <span className="tracking-[0.06px]">e-learning</span>
    </div>
  );
}

function EyeGlyph() {
  return (
    <svg viewBox="0 0 15 12" className="h-3 w-[15px]">
      <path d="M.7 6Q3.500 1.200 7.500 1.200T14.300 6Q11.500 10.400 7.500 10.400T.7 6z" fill="none" stroke="#007cac" strokeWidth="1.500" />
      <circle cx="7.500" cy="5" r="3.500" fill="#007cac" />
      <path d="M5.600 5a1.900 1.900 0 0 1 1.900-1.900" fill="none" stroke="#fff" strokeWidth=".8" />
    </svg>
  );
}

function CogGlyph() {
  return (
    <svg viewBox="0 0 15 15" className="size-[15px]">
      <circle cx="7.500" cy="7.500" r="4.300" fill="none" stroke="currentColor" strokeWidth="2.700" />
      <g stroke="currentColor" strokeWidth="3.400">
        <path d="M7.500 0v2.800M7.500 12.200V15" />
        <path d="M1 3.750l2.400 1.400M11.600 9.850l2.400 1.400M14 3.750l-2.400 1.400M3.400 9.850 1 11.250" />
      </g>
    </svg>
  );
}

function ShieldGlyph() {
  return (
    <svg viewBox="0 0 14 16" className="h-[15px] w-[13px]">
      <path d="M7 .7Q10 2.500 13.200 2.300 13.500 11 7 15.200.5 11 .8 2.300 4 2.500 7 .7z" fill="none" stroke="#1c5877" strokeWidth="1" />
      <path d="M7 2.800q2 1.200 4.300 1.300Q11.300 10 7 13.200 2.700 10 2.700 4.100 5 4 7 2.800z" fill="#054a6b" />
    </svg>
  );
}

function MaterialsGlyph() {
  return (
    <svg viewBox="0 0 15 14" className="h-[14px] w-[15px]">
      <path d="M7.500 0 10.500 3.500H8.300V8H6.700V3.500H4.500z" fill="#007cac" />
      <path d="M4.800 5.500 0 7.800v2.300q1.500 3 7.500 3.200 6-.2 7.500-3.200V7.800l-4.800-2.300v1.400l2 1Q11 9.500 7.500 9.500T2.800 7.900l2-1z" fill="#007cac" />
    </svg>
  );
}

function PaletteGlyph() {
  return (
    <svg viewBox="0 0 15 12" className="h-3 w-[15px]">
      <path d="M7.500 0Q14.500.3 15 5q0 2.500-3 2.300-2.500-.3-1.500 1.700 1 2.500-2.500 3Q.5 11.500 0 6 .5.500 7.500 0z" fill="#007cac" />
      <g fill="#fff">
        <circle cx="3.300" cy="4.300" r="1.100" />
        <circle cx="6.400" cy="2.500" r="1.100" />
        <circle cx="10" cy="2.700" r="1.100" />
        <circle cx="12.500" cy="4.800" r="1" />
        <circle cx="4.500" cy="7.600" r="1.300" />
      </g>
    </svg>
  );
}

const menu = [
  { label: "Content", icon: <EyeGlyph /> },
  { label: "Settings", icon: <CogGlyph /> },
  { label: "Protection", icon: <ShieldGlyph />, active: true },
  { label: "Materials", icon: <MaterialsGlyph /> },
  { label: "Posters/Badges", icon: <PaletteGlyph /> },
];

function Sidebar() {
  return (
    <div className="w-[200px] shrink-0">
      <div className="flex h-[30px] items-center justify-end rounded-[2px] border border-[#007cac] bg-[#5e95ea] pr-[11px] font-['Liberation_Sans',sans-serif] text-[13px] tracking-[0.13px] text-white">
        <svg viewBox="0 0 16 12" className="mr-[8px] h-3 w-4" fill="none" stroke="#fff" strokeWidth="2">
          <rect x="1" y="1" width="14" height="10" rx="1" />
          <rect x="3" y="3.500" width="5" height="5" fill="#fff" stroke="none" />
        </svg>
        Switch to display view
      </div>
      <div className="mt-[23px] rounded-[2px] border border-[#dcdcdc] font-[Roboto,sans-serif] text-[14.500px] text-[#007cac] shadow-[1px_1px_2px_rgba(0,0,0,0.15)]">
        {menu.map((m) => (
          <div
            key={m.label}
            className={`flex h-[38px] items-center border-b border-[#dcdcdc] last:border-b-0 ${m.active ? "border-l-2 border-l-[#005fa3] bg-[#ebf1fb] pl-[22px] text-[#054a6b]" : "pl-6"}`}
          >
            <span className="mb-[2px] flex w-[18px] items-center justify-center">{m.icon}</span>
            <span className="ml-[9px] pt-[2px] tracking-[-0.04px]">{m.label}</span>
          </div>
        ))}
      </div>
    </div>
  );
}

function Row({ label, labelClass = "", className = "", children }) {
  return (
    <div className={`flex gap-[26px] ${className}`}>
      <div className={`w-[147px] shrink-0 text-right font-bold leading-5 ${labelClass}`}>{label}</div>
      <div className="w-[400px] shrink-0">{children}</div>
    </div>
  );
}

function Main() {
  const btn = "flex items-center justify-center rounded-[2px] border border-[#dcdcdc] bg-[#ebebeb]";
  return (
    <div className="ml-[30px] w-[1231px] shrink-0">
      <div className="flex h-[30px] items-center pb-[2px] font-[Roboto,sans-serif] text-[26.500px] font-light text-[#b14300]">
        <span className="w-[114px] whitespace-nowrap tracking-[0.08px]">e-learning</span>
        <svg viewBox="0 0 15 12" className="ml-[10px] mt-px h-3 w-[15px]" fill="#6f6f6f">
          <path d="M0 2.200h11V0l4 3.200-4 3.200V4.200H0zM15 7.900H4V5.700L0 8.900l4 3.100V9.900h11z" />
        </svg>
        <svg viewBox="0 0 16 16" className="ml-[20px] mt-px size-4">
          <path d="M0 1.500h5V0h6v1.500h5V3H0z" fill="#bbb" />
          <path d="M1.200 4h13.600v12H1.200z" fill="#bbb" />
          <path d="M4.500 5.500v8M8 5.500v8M11.500 5.500v8" stroke="#fff" strokeWidth="1.300" />
        </svg>
      </div>
      <h2 className="mt-[28px] h-[34px] border-b border-[#e5e5e5] font-[Roboto,sans-serif] text-[22px] leading-[31px] tracking-[0.5px] text-[#444]">
        Category protection
      </h2>
      <div className="font-['Liberation_Sans',sans-serif] text-[13px] tracking-[0.14px] text-[#6f6f6f]">
        <Row label="Protection mode" className="mt-[23px]" labelClass="tracking-[0.05px]">
          <div className="flex gap-1 font-bold">
            <span className={`${btn} h-[30px] w-[62px] tracking-[0.2px]`}>Public</span>
            <span className="flex h-[30px] w-[82px] items-center justify-center rounded-[2px] border border-[#007cac] bg-linear-to-b from-[#4584e6] to-[#5e95ea] tracking-[0.08px] text-white">
              Inheriting
            </span>
            <span className={`${btn} h-[30px] w-[81px] tracking-[-0.1px]`}>Protected</span>
          </div>
          <div className="mt-[5px] flex h-[82px] rounded-[2px] border border-[#6ac445] bg-[#dff0dd] pl-[10px] pt-[10px]">
            <svg viewBox="0 0 30 30" className="mt-1 size-[30px] shrink-0">
              <path d="M15.900 12V7q0-5 5-5h2q5.200 0 5.200 5v5" fill="none" stroke="#6ac445" strokeWidth="4" />
              <path fillRule="evenodd" d="M1 12h18q1 0 1 1v16q0 1-1 1H1q-1 0-1-1V13q0-1 1-1zM8 20.500q.2-2 2.200-2t2 2q0 1.500-1 2l.8 3.500H8.500v-3z" fill="#6ac445" />
            </svg>
            <div className="ml-[10px] leading-5">
              <div className="font-bold tracking-[0.24px] text-[#6ac445]">Public</div>
              <div>
                This object is publicly accessible since <b className="tracking-[0.12px]">Training and</b>
              </div>
              <div className="tracking-[0.01px]">
                <b className="tracking-[-0.03px]">Development</b> (Category) is not protected.
              </div>
            </div>
          </div>
        </Row>
        <Row label="Access control list" className="mt-[30px]" labelClass="tracking-[-0.04px]">
          <div className="leading-5 tracking-[0.16px] text-[#5e95ea]">Restrict access to this category</div>
          <div className="mt-[2px] italic leading-5 tracking-[0.1px]">List of users allowed to access the category.</div>
        </Row>
        <Row label="Managers" className="mt-[19px]" labelClass="tracking-[-0.13px]">
          <div className="flex h-12 items-center border border-dashed border-[#c4c4c4] pl-[5px] pr-[5px]">
            <UserGlyph className="h-[18px] w-5 text-[#bbb]" />
            <div className="ml-[19px] mt-px grow">
              <div className="leading-[19px] tracking-normal">Maria Dimou</div>
              <div className="text-[11px] leading-[18px] tracking-[-0.26px] text-[#999]">
                maria.dimou@cern.ch <span className="ml-[2px] tracking-[-0.05px] text-[#bbb]">CERN</span>
              </div>
            </div>
            <svg viewBox="0 0 16 16" className="-mt-[4px] size-4" fill="none" stroke="#bbb">
              <circle cx="8" cy="8" r="7.200" strokeWidth="1.500" />
              <path d="m5 5 6 6M11 5l-6 6" strokeWidth="2.400" />
            </svg>
          </div>
          <div className={`${btn} mt-[15px] h-[33px] w-[123px] tracking-normal`}>Add User / Group</div>
        </Row>
        <Row label="No access contact" className="mt-[24px]" labelClass="pt-[6px] tracking-[-0.12px]">
          <div className="h-8 rounded-[2px] border border-[#dcdcdc] bg-white" />
          <div className="mt-[4px] w-[380px] italic leading-[19px] tracking-[0.07px]">
            Contact information shown when someone lacks access to the category
          </div>
        </Row>
        <Row label="Event visibility" className="mt-[20px]" labelClass="pt-[7px] tracking-[0.05px]">
          <div className="flex h-[33px] items-center justify-between rounded-[2px] border border-[#dcdcdc] bg-white pl-[13px] pt-[2px] text-[#444]">
            <span className="tracking-[-0.06px]">From everywhere</span>
            <span className="mb-px flex h-[30px] w-[14px] items-center justify-center border-b-2 border-r-2 border-[#858585] bg-[#f0f0f0]">
              <Caret className="ml-px h-[4px] w-[6px] text-black" />
            </span>
          </div>
        </Row>
      </div>
    </div>
  );
}

function FindBar() {
  return (
    <div className={`flex h-[39px] shrink-0 items-center border-t-2 border-[#c5c4c2] bg-[#f1f0ee] pl-2 text-[14px] tracking-[0.25px] text-[#3f3e3b] ${ubuntu}`}>
      <div className="flex h-7 w-[268px] items-stretch rounded-[2px] border border-[#c2c0bc] bg-white text-[#222]">
        <span className="grow pl-[6px] leading-[25px]">wlc</span>
        <span className="flex w-[31px] items-center justify-center border-l border-[#c2c0bc] bg-[#f7f7f6]">
          <svg viewBox="0 0 10 6" className="mr-px h-[6px] w-[10px]" fill="none" stroke="#3f3e3b" strokeWidth="2">
            <path d="m1 5.500 4-4.300 4 4.300" />
          </svg>
        </span>
        <span className="flex w-[31px] items-center justify-center border-l border-[#c2c0bc] bg-[#f7f7f6]">
          <svg viewBox="0 0 10 6" className="mr-px h-[6px] w-[10px]" fill="none" stroke="#3f3e3b" strokeWidth="2">
            <path d="m1 .5 4 4.300 4-4.300" />
          </svg>
        </span>
      </div>
      <span className="ml-[17px] w-[108px]">High<u className="underline-offset-2">l</u>ight All</span>
      <span className="w-[104px] tracking-[0.2px]">Mat<u className="underline-offset-2">c</u>h Case</span>
      <span className="w-[107.500px]"><u className="underline-offset-2">W</u>hole Words</span>
      <span className="grow tracking-[0px]">1 of 7 matches</span>
      <span className="mr-3"><Cross color="#4c4c4c" /></span>
    </div>
  );
}

export default function App() {
  return (
    <div className="flex h-[900px] w-[1600px] flex-col overflow-hidden bg-white">
      <TitleBar />
      <div className="flex min-h-0 grow">
        <Launcher />
        <div className="flex min-w-0 grow flex-col">
          <TabStrip />
          <Toolbar />
          <div className="flex min-h-0 grow">
            <div className="flex min-w-0 grow flex-col overflow-hidden bg-white">
              <Header />
              <NavBar />
              <Breadcrumb />
              <div className="flex min-h-0 grow overflow-hidden pl-[30px] pt-[25px]">
                <Sidebar />
                <Main />
              </div>
            </div>
            <div className="w-[14px] shrink-0 border-l border-[#ccc] bg-[#e6e5e3]">
              <div className="h-[457px] rounded-full border border-[#c3c1be] bg-linear-to-r from-[#fafafa] to-[#ececeb]" />
            </div>
          </div>
          <FindBar />
        </div>
      </div>
    </div>
  );
}
